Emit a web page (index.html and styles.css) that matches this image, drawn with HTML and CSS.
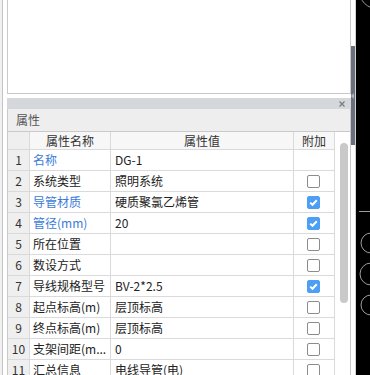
FILE: index.html
```html
<!DOCTYPE html>
<html>
<head>
<meta charset="utf-8">
<link rel="stylesheet" href="styles.css">
</head>
<body>
<div class="app">
  <div class="edge"><div class="edge-line"></div></div>
  <div class="main">
    <div class="top-panel"></div>
    <div class="props">
      <div class="titlebar">
        <svg class="close" width="6" height="6" viewBox="0 0 6 6"><path d="M0.5 0.5 L5.5 5.5 M5.5 0.5 L0.5 5.5" stroke="#7a7a7a" stroke-width="1.2" fill="none"/></svg>
      </div>
      <div class="caption">属性</div>
      <div class="body">
        <div class="grid">
          <div class="c num hd"></div><div class="c hd center">属性名称</div><div class="c hd center">属性值</div><div class="c hd center">附加</div>

          <div class="c num">1</div><div class="c name blue">名称</div><div class="c val">DG-1</div><div class="c chk"></div>
          <div class="c num">2</div><div class="c name">系统类型</div><div class="c val">照明系统</div><div class="c chk"><span class="box"></span></div>
          <div class="c num">3</div><div class="c name blue">导管材质</div><div class="c val">硬质聚氯乙烯管</div><div class="c chk"><span class="box on"><svg width="13" height="13" viewBox="0 0 13 13"><path d="M3.2 6.6 L5.5 8.8 L9.8 4.3" stroke="#fff" stroke-width="2" fill="none"/></svg></span></div>
          <div class="c num">4</div><div class="c name blue">管径(mm)</div><div class="c val">20</div><div class="c chk"><span class="box on"><svg width="13" height="13" viewBox="0 0 13 13"><path d="M3.2 6.6 L5.5 8.8 L9.8 4.3" stroke="#fff" stroke-width="2" fill="none"/></svg></span></div>
          <div class="c num">5</div><div class="c name">所在位置</div><div class="c val"></div><div class="c chk"><span class="box"></span></div>
          <div class="c num">6</div><div class="c name">数设方式</div><div class="c val"></div><div class="c chk"><span class="box"></span></div>
          <div class="c num">7</div><div class="c name">导线规格型号</div><div class="c val">BV-2*2.5</div><div class="c chk"><span class="box on"><svg width="13" height="13" viewBox="0 0 13 13"><path d="M3.2 6.6 L5.5 8.8 L9.8 4.3" stroke="#fff" stroke-width="2" fill="none"/></svg></span></div>
          <div class="c num">8</div><div class="c name">起点标高(m)</div><div class="c val">层顶标高</div><div class="c chk"><span class="box"></span></div>
          <div class="c num">9</div><div class="c name">终点标高(m)</div><div class="c val">层顶标高</div><div class="c chk"><span class="box"></span></div>
          <div class="c num">10</div><div class="c name">支架间距(m...</div><div class="c val">0</div><div class="c chk"><span class="box"></span></div>
          <div class="c num">11</div><div class="c name">汇总信息</div><div class="c val">电线导管(电)</div><div class="c chk"><span class="box"></span></div>
        </div>
        <div class="vscroll"><div class="thumb"></div></div>
      </div>
    </div>
  </div>
  <div class="split"><div class="split-thumb"><span class="grip"></span></div></div>
  <div class="canvas">
    <svg width="14" height="375" viewBox="356 0 14 375">
      <g stroke="#9c9c9c" stroke-width="1" fill="none">
        <circle cx="378" cy="-10" r="19"/>
        <line x1="359" y1="211.5" x2="370" y2="211.5"/>
        <circle cx="371" cy="243" r="10"/>
        <circle cx="371" cy="274" r="11"/>
        <circle cx="371" cy="305" r="10"/>
      </g>
    </svg>
  </div>
</div>
</body>
</html>
```

FILE: styles.css
```css
* { box-sizing: border-box; }
html, body { margin: 0; padding: 0; background: #fff; }
body {
  font-family: "Noto Sans CJK SC", "Noto Sans", sans-serif;
  font-size: 12px;
  color: #222;
}
.app {
  display: flex;
  width: 370px;
  height: 375px;
  overflow: hidden;
}
.edge {
  width: 7px;
  padding-left: 2px;
  background: #f0f0f0;
}
.edge-line {
  height: 100%;
  border-left: 1px solid #c4c4c4;
  background: #fff;
}
.main {
  width: 344px;
  display: flex;
  flex-direction: column;
  background: #fff;
}
.top-panel {
  height: 94px;
  border-left: 1px solid #c9c9c9;
  border-right: 1px solid #c9c9c9;
  border-bottom: 1px solid #c9c9c9;
}
.props {
  margin-top: 4px;
  flex: 1;
  display: flex;
  flex-direction: column;
  min-height: 0;
}
.titlebar {
  height: 11px;
  background: #d4d7db;
  display: flex;
  justify-content: flex-end;
  align-items: center;
  padding-right: 6px;
}
.close { display: block; }
.caption {
  height: 23px;
  line-height: 22px;
  padding-left: 8px;
  background: #eeeeee;
  border-left: 1px solid #c9c9c9;
  border-right: 1px solid #c9c9c9;
  border-bottom: 1px solid #c9c9c9;
  color: #555;
}
.body {
  flex: 1;
  display: flex;
  min-height: 0;
  border-left: 1px solid #c9c9c9;
  border-right: 1px solid #c9c9c9;
}
.grid {
  display: grid;
  grid-template-columns: 21px 80px 182px 40px;
  grid-template-rows: 17px;
  grid-auto-rows: 20px;
  gap: 1px;
  background: #dadada;
  border-right: 1px solid #dadada;
  align-content: start;
}
.c {
  background: #fff;
  display: flex;
  align-items: center;
  white-space: nowrap;
  overflow: hidden;
  line-height: 1;
}
.hd { background: #f7f7f7; color: #333; }
.center { justify-content: center; }
.num {
  background: #efefef;
  justify-content: center;
  color: #333;
}
.num.hd { background: #efefef; }
.name { padding-left: 3px; }
.val { padding-left: 4px; }
.blue { color: #3a7bd8; }
.chk { justify-content: center; }
.box {
  display: block;
  width: 13px;
  height: 13px;
  border: 1px solid #8c8c8c;
  border-radius: 2px;
  background: #fff;
  margin-left: -1px;
}
.box.on {
  background: #4d9ff6;
  border-color: #4d9ff6;
  position: relative;
}
.box.on svg {
  position: absolute;
  left: -1px;
  top: -1px;
}
.vscroll {
  width: 15px;
  padding: 11px 2px 0 5px;
  background: #fff;
}
.thumb {
  width: 8px;
  height: 160px;
  border-radius: 4px;
  background: #c9c9c9;
}
.split {
  width: 5px;
  background: #fff;
  border-right: 1px solid #d2d2d2;
}
.split-thumb {
  position: relative;
  margin-top: 46px;
  height: 99px;
  background: #68717b;
}
.grip {
  position: absolute;
  left: 0;
  top: 47px;
  width: 0;
  height: 0;
  border-top: 3px solid transparent;
  border-bottom: 3px solid transparent;
  border-right: 3px solid #aeb4ba;
}
.canvas {
  flex: 1;
  background: #000;
}
.canvas svg { display: block; }
```
